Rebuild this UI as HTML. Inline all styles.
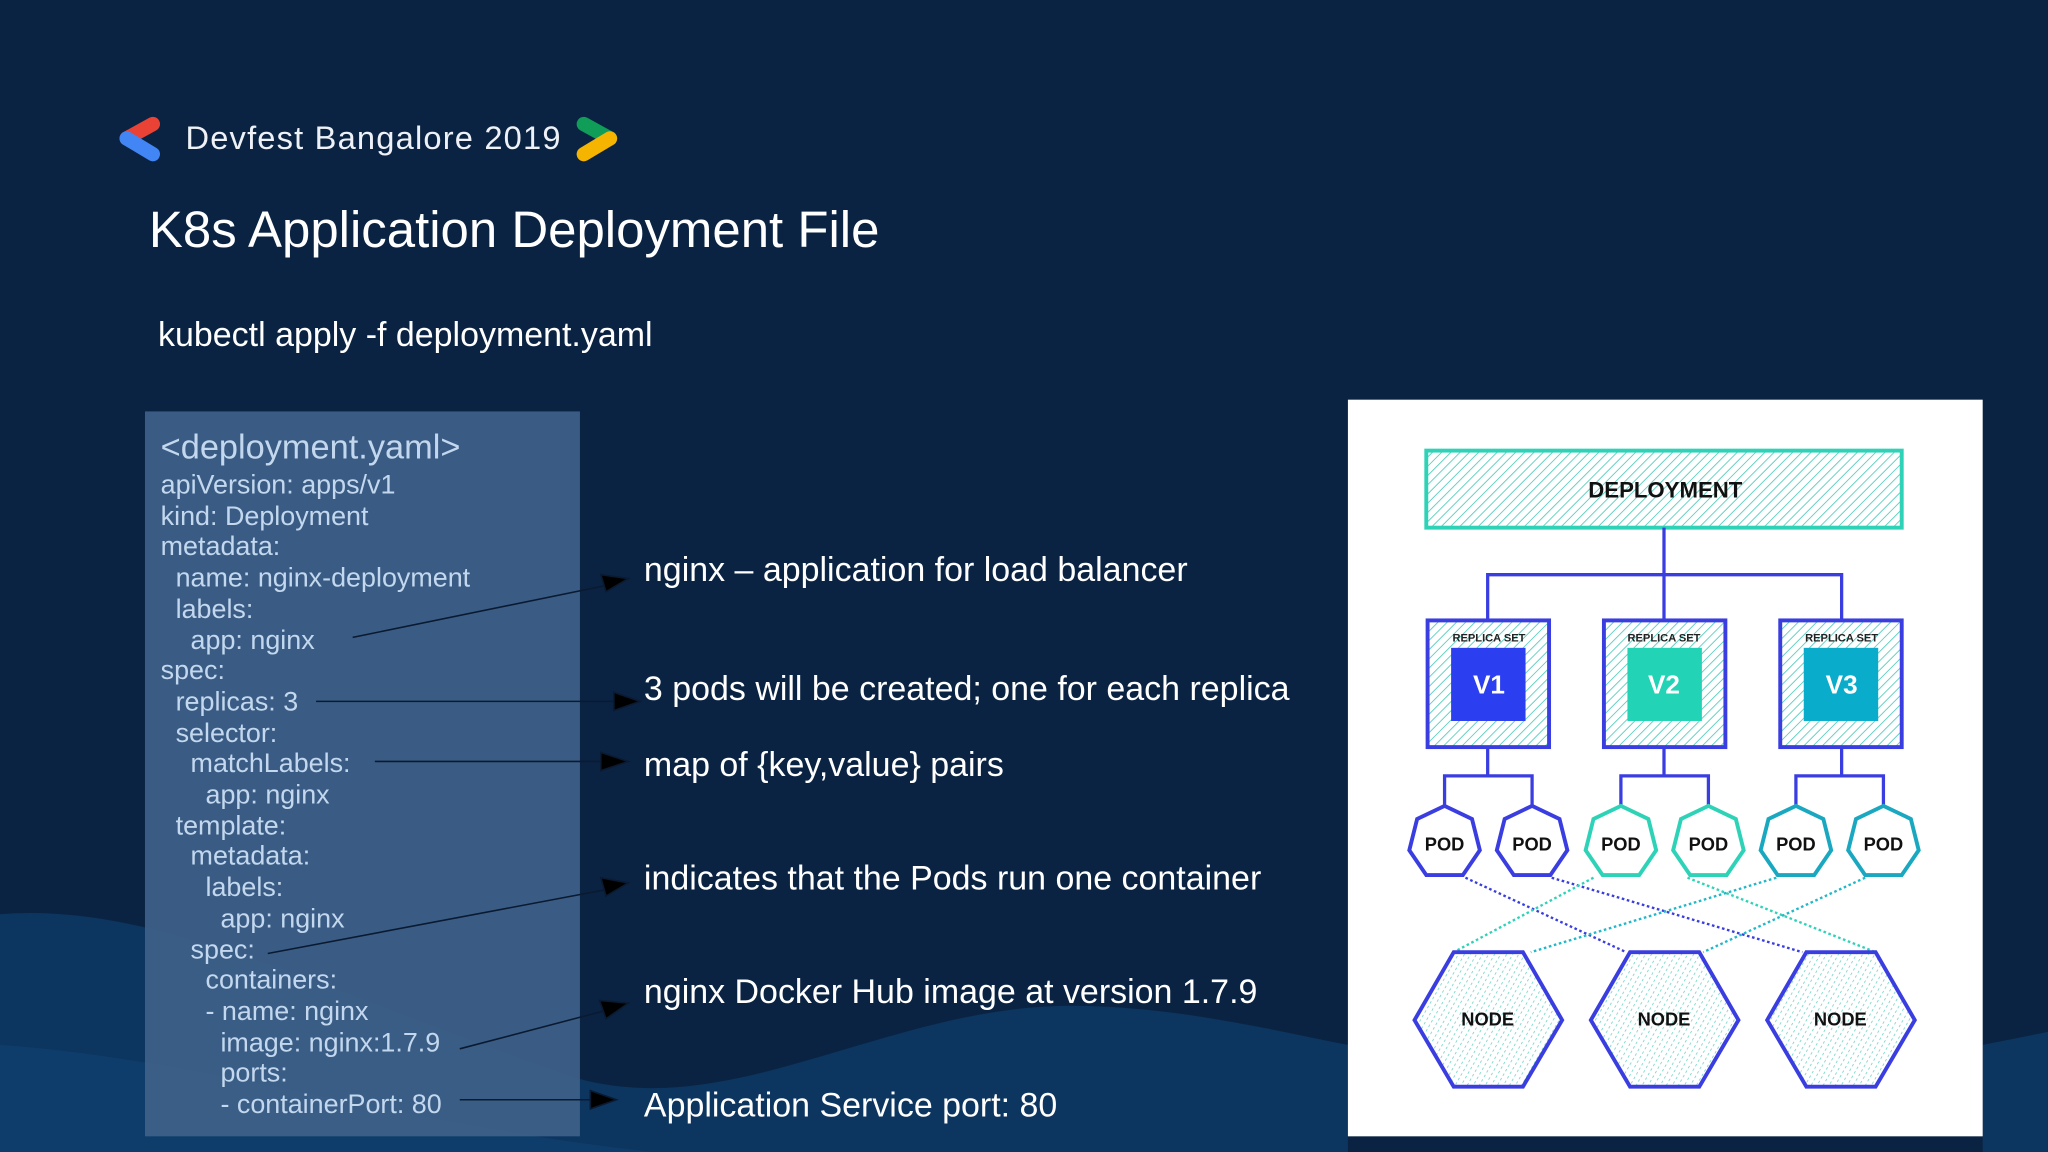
<!DOCTYPE html>
<html><head><meta charset="utf-8"><style>
html,body{margin:0;padding:0;width:2048px;height:1152px;overflow:hidden;background:#0a2342}
#s{position:absolute;left:0;top:0;width:1568px;height:882px;transform:scale(1.306122);transform-origin:0 0;font-family:"Liberation Sans",sans-serif}
.t{position:absolute;white-space:pre;color:#fff}
.c{position:absolute;left:123px;white-space:pre;color:#c3d8ef;font-size:20.6px;line-height:23.7px}
</style></head><body><div id="s">
<svg width="1568" height="882" style="position:absolute;left:0;top:0">
<path d="M0 700 C120 690 250 760 440 825 C560 860 680 770 820 770 C900 770 980 790 1032 800 L1032 882 L0 882Z" fill="#0c355f"/>
<path d="M0 800 C150 810 300 860 500 882 L0 882Z" fill="#0e3d6b"/>
<path d="M1518 800 L1568 790 L1568 882 L1518 882Z" fill="#0c355f"/>
<rect x="111" y="315" width="333" height="555" fill="#3d6088" opacity="0.95"/>
<g stroke-linecap="round" stroke-width="11" fill="none">
<line x1="117" y1="95" x2="97" y2="106" stroke="#ea4335"/>
<line x1="97" y1="106" x2="117" y2="118" stroke="#4285f4"/>
<line x1="447" y1="95" x2="467" y2="106" stroke="#0f9d58"/>
<line x1="467" y1="106" x2="447" y2="118" stroke="#f4b400"/>
</g>
<g stroke="#0a1a30" stroke-width="1.2" fill="#000">
<line x1="270" y1="488" x2="470" y2="447"/><polygon points="460,440 481,443 464,453"/>
<line x1="242" y1="537" x2="475" y2="537"/><polygon points="470,530 490,537 470,544"/>
<line x1="287" y1="583" x2="465" y2="583"/><polygon points="460,576 481,583 460,590"/>
<line x1="205" y1="730" x2="470" y2="680"/><polygon points="460,672 481,676 464,686"/>
<line x1="352" y1="803" x2="470" y2="772"/><polygon points="459,766 481,768 464,780"/>
<line x1="352" y1="842" x2="460" y2="842"/><polygon points="452,835 472,842 452,849"/>
</g>
<defs>
<pattern id="h" width="5" height="5" patternUnits="userSpaceOnUse" patternTransform="rotate(45)"><rect width="5" height="5" fill="#fff"/><line x1="0" y1="0" x2="0" y2="5" stroke="#5ccfc0" stroke-width="1.4"/></pattern>
<pattern id="d" width="4" height="4" patternUnits="userSpaceOnUse" patternTransform="rotate(30)"><rect width="4" height="4" fill="#fff"/><line x1="0" y1="0" x2="0" y2="2" stroke="#6cd2c6" stroke-width="1.2"/></pattern>
</defs>
<rect x="1032" y="306" width="486" height="564" fill="#fff"/>
<rect x="1092" y="345" width="364" height="59" fill="url(#h)" stroke="#2ed3b7" stroke-width="3"/>
<text x="1275" y="381" text-anchor="middle" font-family="Liberation Sans" font-weight="bold" font-size="17" fill="#111">DEPLOYMENT</text>
<g stroke="#3a3ee0" stroke-width="2.5" fill="none">
<path d="M1274 404V475M1139 475V440H1410V475"/>
<path d="M1139 572V594M1106 618V594H1173V618"/>
<path d="M1274 572V594M1241 618V594H1308V618"/>
<path d="M1410 572V594M1375 618V594H1442V618"/>
</g>
<g stroke="#3a3ee0" stroke-width="3">
<rect x="1093" y="475" width="93" height="97" fill="url(#h)"/>
<rect x="1228" y="475" width="93" height="97" fill="url(#h)"/>
<rect x="1363" y="475" width="93" height="97" fill="url(#h)"/>
</g>
<rect x="1111" y="496" width="57" height="56" fill="#2b3ff0"/>
<rect x="1246" y="496" width="57" height="56" fill="#22d3b5"/>
<rect x="1381" y="496" width="57" height="56" fill="#0aaccc"/>
<g font-family="Liberation Sans" font-weight="bold" fill="#222" font-size="8.5" text-anchor="middle">
<text x="1140" y="491">REPLICA SET</text><text x="1274" y="491">REPLICA SET</text><text x="1410" y="491">REPLICA SET</text></g>
<g font-family="Liberation Sans" font-weight="bold" fill="#fff" font-size="20" text-anchor="middle">
<text x="1140" y="531">V1</text><text x="1274" y="531">V2</text><text x="1410" y="531">V3</text></g>
<g stroke-width="1.8" stroke-dasharray="2 2" fill="none">
<line x1="1122" y1="672" x2="1245" y2="729" stroke="#3a3ee0"/>
<line x1="1188" y1="672" x2="1380" y2="729" stroke="#3a3ee0"/>
<line x1="1220" y1="672" x2="1113" y2="729" stroke="#2ed3b7"/>
<line x1="1292" y1="672" x2="1436" y2="729" stroke="#2ed3b7"/>
<line x1="1360" y1="672" x2="1172" y2="729" stroke="#22b8c8"/>
<line x1="1428" y1="672" x2="1304" y2="729" stroke="#22b8c8"/>
</g>
<g stroke-width="3" fill="#fff">
<polygon points="1106,617 1127,627 1133,651 1120,670 1092,670 1079,651 1085,627" stroke="#3a3ee0"/>
<polygon points="1173,617 1194,627 1200,651 1187,670 1159,670 1146,651 1152,627" stroke="#3a3ee0"/>
<polygon points="1241,617 1262,627 1268,651 1255,670 1227,670 1214,651 1220,627" stroke="#2ed3b7"/>
<polygon points="1308,617 1329,627 1335,651 1322,670 1294,670 1281,651 1287,627" stroke="#2ed3b7"/>
<polygon points="1375,617 1396,627 1402,651 1389,670 1361,670 1348,651 1354,627" stroke="#1aa8c0"/>
<polygon points="1442,617 1463,627 1469,651 1456,670 1428,670 1415,651 1421,627" stroke="#1aa8c0"/>
</g>
<g font-family="Liberation Sans" font-weight="bold" fill="#111" font-size="14" text-anchor="middle">
<text x="1106" y="651">POD</text><text x="1173" y="651">POD</text><text x="1241" y="651">POD</text><text x="1308" y="651">POD</text><text x="1375" y="651">POD</text><text x="1442" y="651">POD</text></g>
<g stroke="#3a3ee0" stroke-width="3" fill="url(#d)">
<polygon points="1113,729 1166,729 1196,781 1166,832 1113,832 1083,781"/>
<polygon points="1248,729 1301,729 1331,781 1301,832 1248,832 1218,781"/>
<polygon points="1383,729 1436,729 1466,781 1436,832 1383,832 1353,781"/>
</g>
<g font-family="Liberation Sans" font-weight="bold" fill="#111" font-size="14" text-anchor="middle">
<text x="1139" y="785">NODE</text><text x="1274" y="785">NODE</text><text x="1409" y="785">NODE</text></g>
</svg>
<div class="t" style="left:142px;top:92px;font-size:25px;letter-spacing:0.9px;color:#eef2f7">Devfest Bangalore 2019</div>
<div class="t" style="left:114px;top:155px;font-size:39px">K8s Application Deployment File</div>
<div class="t" style="left:121px;top:241px;font-size:26px">kubectl apply -f deployment.yaml</div>
<div class="c" style="top:331px;font-size:26.3px">&lt;deployment.yaml&gt;</div>
<div class="c" style="top:360px">apiVersion: apps/v1
kind: Deployment
metadata:
  name: nginx-deployment
  labels:
    app: nginx
spec:
  replicas: 3
  selector:
    matchLabels:
      app: nginx
  template:
    metadata:
      labels:
        app: nginx
    spec:
      containers:
      - name: nginx
        image: nginx:1.7.9
        ports:
        - containerPort: 80</div>
<div class="t" style="left:493px;top:421px;font-size:26px">nginx – application for load balancer</div>
<div class="t" style="left:493px;top:512px;font-size:26px">3 pods will be created; one for each replica</div>
<div class="t" style="left:493px;top:570px;font-size:26px">map of {key,value} pairs</div>
<div class="t" style="left:493px;top:657px;font-size:26px">indicates that the Pods run one container</div>
<div class="t" style="left:493px;top:744px;font-size:26px">nginx Docker Hub image at version 1.7.9</div>
<div class="t" style="left:493px;top:831px;font-size:26px">Application Service port: 80</div>
</div></body></html>
